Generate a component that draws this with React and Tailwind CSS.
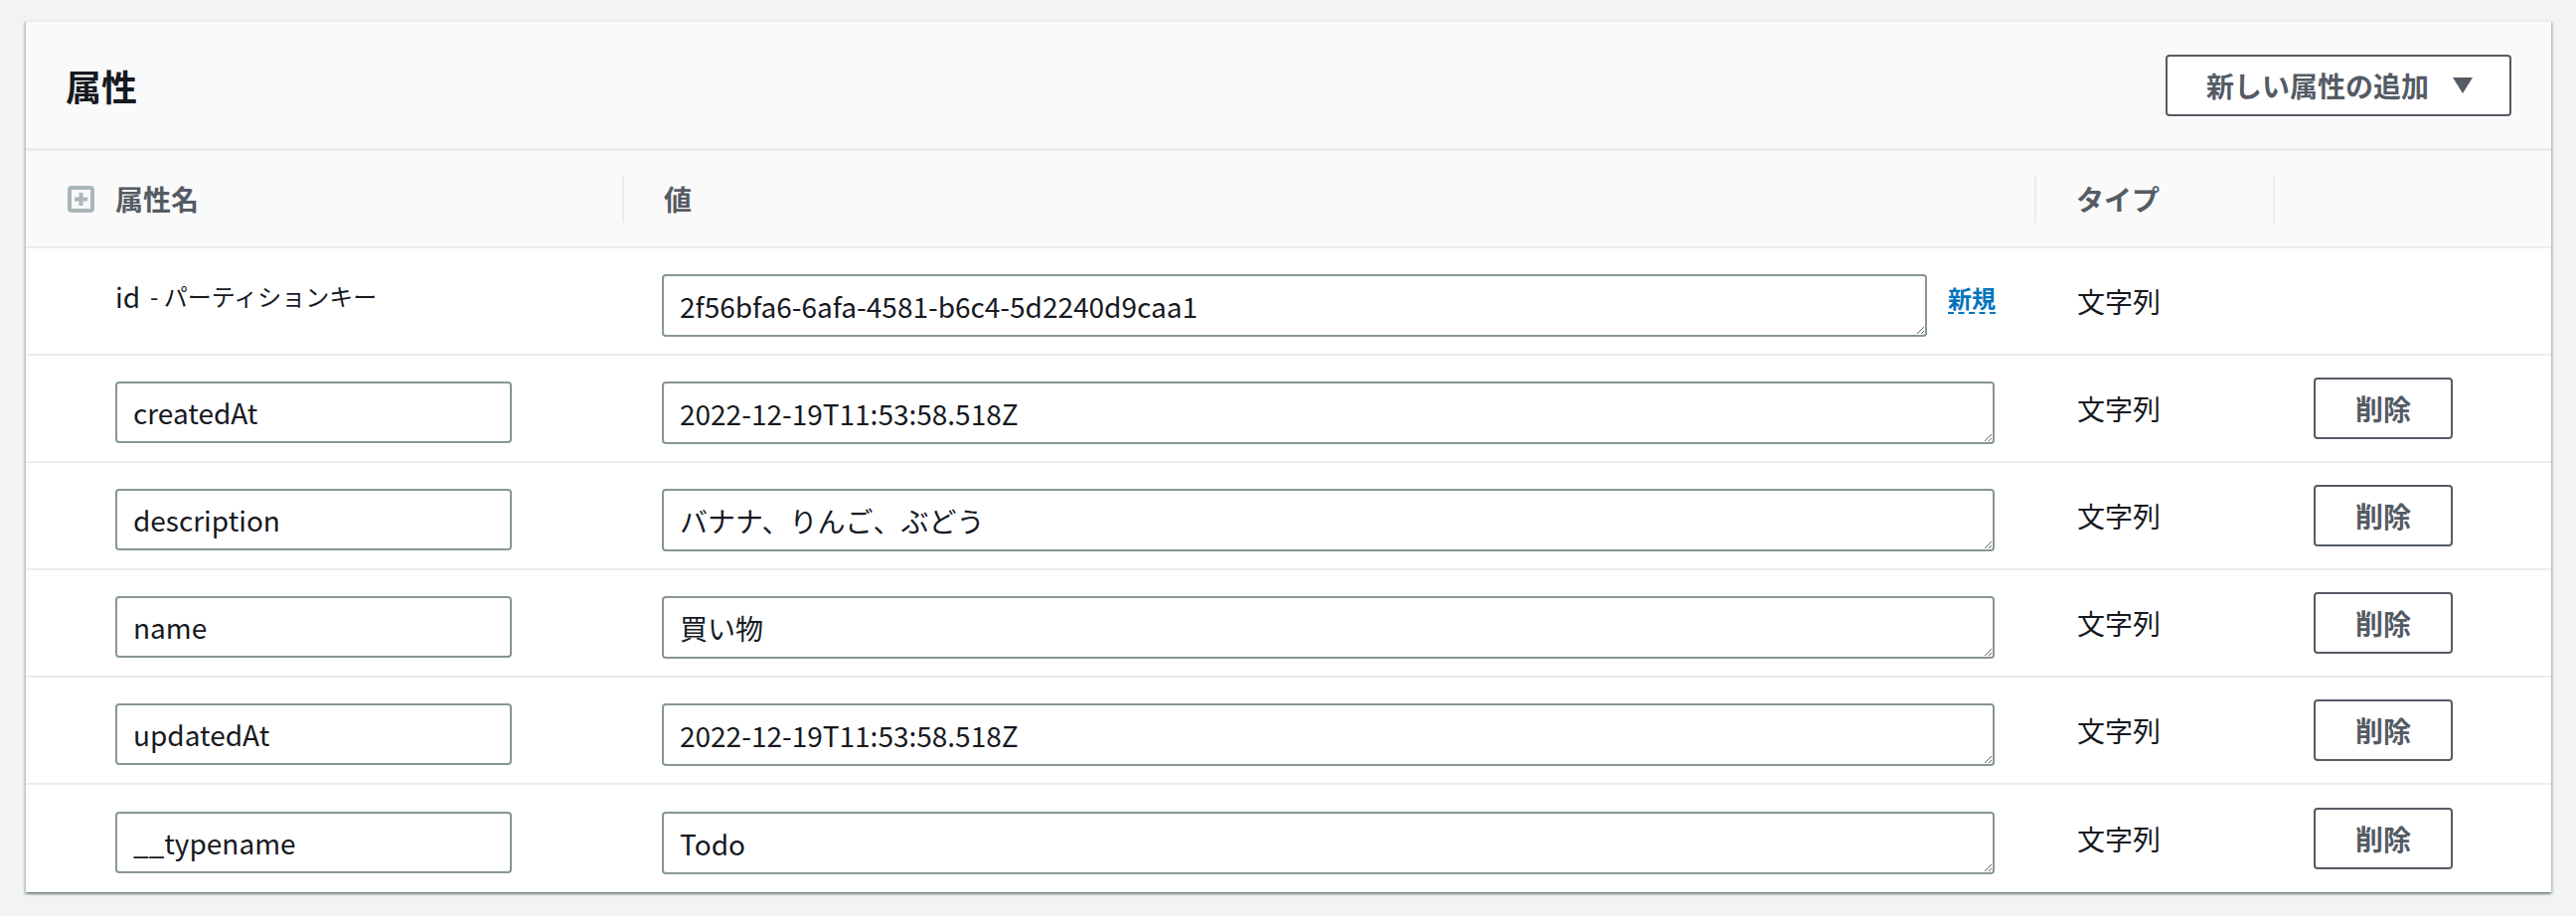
import { useState } from 'react';

const rows = [
    { key: 'createdAt', value: '2022-12-19T11:53:58.518Z' },
    { key: 'description', value: 'バナナ、りんご、ぶどう' },
    { key: 'name', value: '買い物' },
    { key: 'updatedAt', value: '2022-12-19T11:53:58.518Z' },
    { key: '__typename', value: 'Todo' },
];

const grid = 'grid grid-cols-[600px_1421px_240px_1fr]';
const textareaCls = 'block w-full h-[63px] border-2 border-[#879596] rounded-[4px] bg-white pl-[16px] pr-[16px] pt-[10px] pb-[9px] text-[28px] leading-[40px] text-[#16191f] overflow-hidden outline-none';

function PlusIcon() {
    return (
        <svg width="27" height="27" viewBox="0 0 27 27">
            <rect x="2" y="2" width="23" height="23" rx="2" fill="#f7f8f8" stroke="#aab7b8" strokeWidth="4" />
            <rect x="11.5" y="7" width="4" height="13" fill="#aab7b8" />
            <rect x="7" y="11.5" width="13" height="4" fill="#aab7b8" />
        </svg>
    );
}

function HeadCell({ children }) {
    return (
        <div className="flex items-center">
            <div className="w-[2px] h-[47px] bg-[#eaeded]" />
            <span className="ml-[40px] font-bold text-[#545b64]">{children}</span>
        </div>
    );
}

export default function App() {
    const [items] = useState(rows);

    return (
        <div className="min-h-[922px] bg-[#f2f3f3] pt-[20px] pl-[26px] pr-[25px] font-['Noto_Sans_CJK_JP',sans-serif] text-[28px] text-[#16191f]">
            <div className="bg-white border-t-2 border-[#eaeded] shadow-[0_2px_2px_0_rgba(0,28,36,0.3),2px_2px_2px_0_rgba(0,28,36,0.15),-2px_2px_2px_0_rgba(0,28,36,0.15)]">
                {/* header */}
                <div className="h-[130px] bg-[#fafafa] border-b-[3px] border-[#eaeded] flex items-center justify-between pl-[40px] pr-[40px]">
                    <h2 className="text-[36px] font-bold leading-[44px]">属性</h2>
                    <button className="h-[62px] flex items-center gap-[24px] border-2 border-[#545b64] rounded-[4px] bg-white pl-[39px] pr-[37px] font-bold text-[#545b64]">
                        新しい属性の追加
                        <svg width="20" height="16" viewBox="0 0 20 16"><polygon points="0,0 20,0 10,16" fill="#545b64" /></svg>
                    </button>
                </div>

                {/* column header */}
                <div className={`${grid} h-[98px] bg-[#fafafa] border-b-2 border-[#eaeded]`}>
                    <div className="flex items-center pl-[42px] gap-[21px]">
                        <PlusIcon />
                        <span className="font-bold text-[#545b64]">属性名</span>
                    </div>
                    <HeadCell>値</HeadCell>
                    <HeadCell>タイプ</HeadCell>
                    <HeadCell>{''}</HeadCell>
                </div>

                {/* partition key */}
                <div className={`${grid} h-[108px] border-b-2 border-[#eaeded]`}>
                    <div className="flex items-center pl-[90px] pb-[10px]">
                        <span>id</span>
                        <span className="ml-[10px] text-[24px]">- パーティションキー</span>
                    </div>
                    <div className="flex items-center pl-[40px] pr-[39px] gap-[21px]">
                        <div className="flex-1 mt-[8px]">
                            <textarea rows={1} defaultValue="2f56bfa6-6afa-4581-b6c4-5d2240d9caa1" className={textareaCls} />
                        </div>
                        <span className="text-[24px] font-bold text-[#0073bb] leading-[28px] border-b-2 border-dashed border-[#0073bb] -mt-[4px]">新規</span>
                    </div>
                    <div className="flex items-center pl-[43px]">文字列</div>
                    <div />
                </div>

                {items.map((row, i) => (
                    <div key={row.key} className={`${grid} h-[108px] ${i < items.length - 1 ? 'border-b-2 border-[#eaeded]' : ''}`}>
                        <div className="flex items-center pl-[90px]">
                            <input type="text" defaultValue={row.key} className="mt-[8px] w-[399px] h-[62px] border-2 border-[#879596] rounded-[4px] bg-white px-[16px] text-[28px] text-[#16191f] outline-none" />
                        </div>
                        <div className="flex items-center pl-[40px] pr-[40px]">
                            <div className="w-full mt-[8px]">
                                <textarea rows={1} defaultValue={row.value} className={textareaCls} />
                            </div>
                        </div>
                        <div className="flex items-center pl-[43px]">文字列</div>
                        <div className="flex items-center pl-[41px]">
                            <button className="w-[140px] h-[62px] border-2 border-[#545b64] rounded-[4px] bg-white font-bold text-[#545b64]">削除</button>
                        </div>
                    </div>
                ))}
            </div>
        </div>
    );
}
